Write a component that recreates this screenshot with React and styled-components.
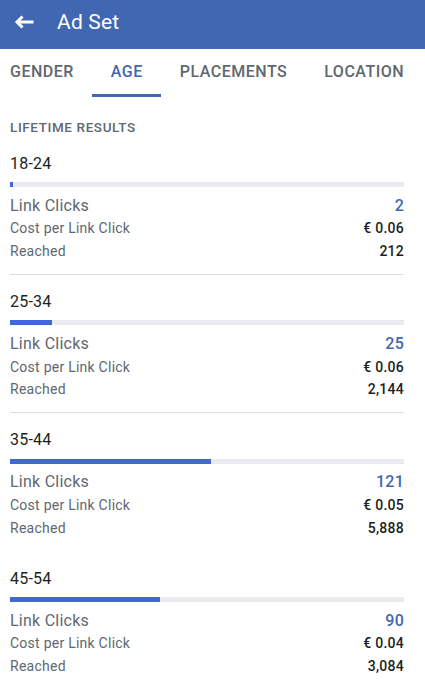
import React from 'react'
import styled, { createGlobalStyle } from 'styled-components'

const GlobalStyle = createGlobalStyle`
  body {
    margin: 0;
    background: #fff;
    font-family: Roboto, "Liberation Sans", sans-serif;
    -webkit-font-smoothing: antialiased;
  }
`

const colors = {
  blue: '#4267b2',
  bar: '#4169d6',
  track: '#e9ebee',
  grey: '#606770',
  dark: '#1c1e21',
  divider: '#dadde1'
}

const Header = styled.header`
  height: 49px;
  box-sizing: border-box;
  padding: 0 0 5px 14px;
  display: flex;
  align-items: center;
  background: ${colors.blue};
  color: #fff;
`

const BackIcon = styled.svg`
  width: 20px;
  height: 14px;
  display: block;
`

const Title = styled.h1`
  margin: 0 0 0 23px;
  font-size: 21px;
  line-height: 24px;
  font-weight: 400;
  letter-spacing: 0.2px;
`

const Tabs = styled.nav`
  height: 48px;
  display: flex;
  overflow: hidden;
  white-space: nowrap;
`

const Tab = styled.div`
  display: flex;
  align-items: center;
  box-sizing: border-box;
  padding: 0 18.5px;
  font-size: 16px;
  font-weight: 500;
  letter-spacing: 0.5px;
  text-transform: uppercase;
  color: ${p => (p.$active ? colors.blue : colors.grey)};
  border-bottom: 3px solid ${p => (p.$active ? colors.blue : 'transparent')};

  &:first-child {
    padding-left: 10px;
  }
`

const Content = styled.main`
  padding: 0 21px 0 10px;
`

const SectionLabel = styled.div`
  margin-top: 21.5px;
  margin-bottom: 2px;
  font-size: 13.5px;
  line-height: 16px;
  font-weight: 500;
  letter-spacing: 0.6px;
  color: ${colors.grey};
`

const Group = styled.section`
  padding: 17px 0 11px;
  border-bottom: 1px solid ${p => (p.$divider ? colors.divider : 'transparent')};
`

const GroupTitle = styled.div`
  font-size: 16px;
  line-height: 20px;
  letter-spacing: 0.2px;
  color: ${colors.dark};
`

const Track = styled.div`
  height: 5px;
  margin: 8.5px 0 7.5px;
  background: ${colors.track};
`

const Fill = styled.div`
  height: 100%;
  background: ${colors.bar};
`

const Row = styled.div`
  display: flex;
  justify-content: space-between;
  align-items: baseline;
  line-height: 22.8px;
  font-size: ${p => (p.$main ? '16px' : '14px')};
  letter-spacing: 0.25px;
  color: ${colors.grey};
`

const Value = styled.span`
  font-weight: 500;
  color: ${p => (p.$accent ? colors.blue : colors.dark)};
`

const groups = [
  { range: '18-24', clicks: 2, cost: '€ 0.06', reached: '212', divider: true },
  { range: '25-34', clicks: 25, cost: '€ 0.06', reached: '2,144', divider: true },
  { range: '35-44', clicks: 121, cost: '€ 0.05', reached: '5,888' },
  { range: '45-54', clicks: 90, cost: '€ 0.04', reached: '3,084' }
]

const SCALE = 237

export default function App() {
  return (
    <>
      <GlobalStyle />
      <Header>
        <BackIcon viewBox="0 0 20 14" fill="none" stroke="#fff" strokeWidth="3">
          <path d="M19.5 7H3" />
          <path d="M8.5 1.5L3 7l5.5 5.5" strokeLinejoin="miter" />
        </BackIcon>
        <Title>Ad Set</Title>
      </Header>
      <Tabs>
        <Tab>Gender</Tab>
        <Tab $active>Age</Tab>
        <Tab>Placements</Tab>
        <Tab>Location</Tab>
      </Tabs>
      <Content>
        <SectionLabel>LIFETIME RESULTS</SectionLabel>
        {groups.map(g => (
          <Group key={g.range} $divider={g.divider}>
            <GroupTitle>{g.range}</GroupTitle>
            <Track>
              <Fill style={{ width: `${(g.clicks / SCALE) * 100}%` }} />
            </Track>
            <Row $main>
              <span>Link Clicks</span>
              <Value $accent>{g.clicks}</Value>
            </Row>
            <Row>
              <span>Cost per Link Click</span>
              <Value>{g.cost}</Value>
            </Row>
            <Row>
              <span>Reached</span>
              <Value>{g.reached}</Value>
            </Row>
          </Group>
        ))}
      </Content>
    </>
  )
}
